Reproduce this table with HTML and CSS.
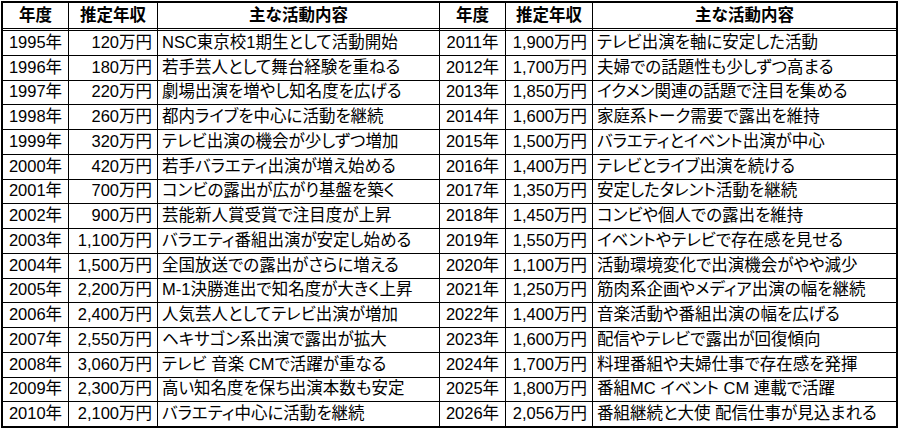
FILE: index.html
```html
<!DOCTYPE html>
<html lang="ja">
<head>
<meta charset="utf-8">
<title>推定年収の推移</title>
<link rel="stylesheet" href="styles.css">
</head>
<body>
<table class="income">
  <colgroup>
    <col class="c-year"><col class="c-amt"><col class="c-desc">
    <col class="c-year"><col class="c-amt2"><col class="c-desc2">
  </colgroup>
  <thead>
    <tr>
      <th>年度</th><th>推定年収</th><th>主な活動内容</th>
      <th>年度</th><th>推定年収</th><th>主な活動内容</th>
    </tr>
  </thead>
  <tbody>
    <tr><td class="yr">1995年</td><td class="amt">120万円</td><td class="desc">NSC東京校1期生として活動開始</td><td class="yr">2011年</td><td class="amt">1,900万円</td><td class="desc">テレビ出演を軸に安定した活動</td></tr>
    <tr><td class="yr">1996年</td><td class="amt">180万円</td><td class="desc">若手芸人として舞台経験を重ねる</td><td class="yr">2012年</td><td class="amt">1,700万円</td><td class="desc">夫婦での話題性も少しずつ高まる</td></tr>
    <tr><td class="yr">1997年</td><td class="amt">220万円</td><td class="desc">劇場出演を増やし知名度を広げる</td><td class="yr">2013年</td><td class="amt">1,850万円</td><td class="desc">イクメン関連の話題で注目を集める</td></tr>
    <tr><td class="yr">1998年</td><td class="amt">260万円</td><td class="desc">都内ライブを中心に活動を継続</td><td class="yr">2014年</td><td class="amt">1,600万円</td><td class="desc">家庭系トーク需要で露出を維持</td></tr>
    <tr><td class="yr">1999年</td><td class="amt">320万円</td><td class="desc">テレビ出演の機会が少しずつ増加</td><td class="yr">2015年</td><td class="amt">1,500万円</td><td class="desc">バラエティとイベント出演が中心</td></tr>
    <tr><td class="yr">2000年</td><td class="amt">420万円</td><td class="desc">若手バラエティ出演が増え始める</td><td class="yr">2016年</td><td class="amt">1,400万円</td><td class="desc">テレビとライブ出演を続ける</td></tr>
    <tr><td class="yr">2001年</td><td class="amt">700万円</td><td class="desc">コンビの露出が広がり基盤を築く</td><td class="yr">2017年</td><td class="amt">1,350万円</td><td class="desc">安定したタレント活動を継続</td></tr>
    <tr><td class="yr">2002年</td><td class="amt">900万円</td><td class="desc">芸能新人賞受賞で注目度が上昇</td><td class="yr">2018年</td><td class="amt">1,450万円</td><td class="desc">コンビや個人での露出を維持</td></tr>
    <tr><td class="yr">2003年</td><td class="amt">1,100万円</td><td class="desc">バラエティ番組出演が安定し始める</td><td class="yr">2019年</td><td class="amt">1,550万円</td><td class="desc">イベントやテレビで存在感を見せる</td></tr>
    <tr><td class="yr">2004年</td><td class="amt">1,500万円</td><td class="desc">全国放送での露出がさらに増える</td><td class="yr">2020年</td><td class="amt">1,100万円</td><td class="desc">活動環境変化で出演機会がやや減少</td></tr>
    <tr><td class="yr">2005年</td><td class="amt">2,200万円</td><td class="desc">M-1決勝進出で知名度が大きく上昇</td><td class="yr">2021年</td><td class="amt">1,250万円</td><td class="desc">筋肉系企画やメディア出演の幅を継続</td></tr>
    <tr><td class="yr">2006年</td><td class="amt">2,400万円</td><td class="desc">人気芸人としてテレビ出演が増加</td><td class="yr">2022年</td><td class="amt">1,400万円</td><td class="desc">音楽活動や番組出演の幅を広げる</td></tr>
    <tr><td class="yr">2007年</td><td class="amt">2,550万円</td><td class="desc">ヘキサゴン系出演で露出が拡大</td><td class="yr">2023年</td><td class="amt">1,600万円</td><td class="desc">配信やテレビで露出が回復傾向</td></tr>
    <tr><td class="yr">2008年</td><td class="amt">3,060万円</td><td class="desc">テレビ 音楽 CMで活躍が重なる</td><td class="yr">2024年</td><td class="amt">1,700万円</td><td class="desc">料理番組や夫婦仕事で存在感を発揮</td></tr>
    <tr><td class="yr">2009年</td><td class="amt">2,300万円</td><td class="desc">高い知名度を保ち出演本数も安定</td><td class="yr">2025年</td><td class="amt">1,800万円</td><td class="desc">番組MC イベント CM 連載で活躍</td></tr>
    <tr><td class="yr">2010年</td><td class="amt">2,100万円</td><td class="desc">バラエティ中心に活動を継続</td><td class="yr">2026年</td><td class="amt">2,056万円</td><td class="desc">番組継続と大使 配信仕事が見込まれる</td></tr>
  </tbody>
</table>
</body>
</html>
```
FILE: styles.css
```css
html, body {
  margin: 0;
  padding: 0;
  background: #fff;
}

body {
  font-family: "Liberation Sans", "Noto Sans CJK JP", sans-serif;
  color: #000;
}

.income {
  margin: 1px 0 0 1px;
  border-collapse: separate;
  border-spacing: 0;
  table-layout: fixed;
  width: 897px;
  border-top: 2px solid #000;
  border-left: 2px solid #000;
  border-right: 1px solid #000;
  border-bottom: 1px solid #000;
}

.c-year { width: 66px; }
.c-amt { width: 89px; }
.c-desc { width: 282px; }
.c-amt2 { width: 87px; }
.c-desc2 { width: 304px; }

.income th,
.income td {
  box-sizing: border-box;
  border-right: 1px solid #000;
  border-bottom: 1px solid #000;
  padding: 0 4px;
  font-size: 16.5px;
  line-height: 18px;
  white-space: nowrap;
  overflow: hidden;
}

.income th {
  height: 28px;
  font-weight: bold;
  text-align: center;
  border-bottom: 3px double #000;
  padding-bottom: 1px;
}

.income td {
  height: 24.75px;
  padding-bottom: 2px;
}

.income .yr {
  text-align: center;
  padding-left: 2px;
  padding-right: 2px;
}

.income .amt {
  text-align: right;
  padding-right: 5px;
}

.income .desc {
  text-align: left;
  padding-left: 4px;
  font-feature-settings: "palt";
}
```
